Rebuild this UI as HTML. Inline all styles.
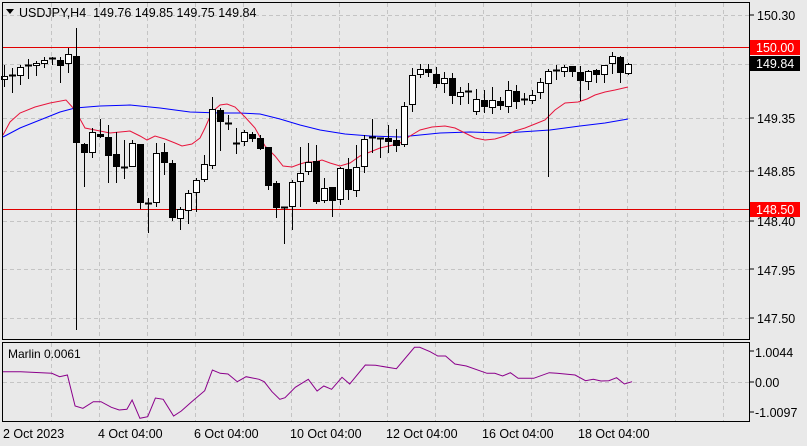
<!DOCTYPE html>
<html><head><meta charset="utf-8"><style>
html,body{margin:0;padding:0;background:#e9e9e9;width:807px;height:446px;overflow:hidden}
svg{display:block;font-family:"Liberation Sans",Tahoma,sans-serif}
</style></head><body>
<svg id="s" width="807" height="446" xmlns="http://www.w3.org/2000/svg">
<rect width="807" height="446" fill="#e9e9e9"/>
<g id="grid" stroke="#c4c4c4" stroke-dasharray="4,3" stroke-width="1"></g>
<line x1="2" y1="47.5" x2="750" y2="47.5" stroke="#e00000"/>
<line x1="2" y1="209.5" x2="750" y2="209.5" stroke="#e00000"/>
<g id="ma"></g>
<g id="c"></g>
<rect x="2.5" y="2.5" width="747" height="337" fill="none" stroke="#000"/>
<rect x="2.5" y="342.5" width="747" height="79" fill="none" stroke="#000"/>
<g font-size="12.5" fill="#000">
<path d="M6 9 L14 9 L10 14 Z" fill="#000"/>
<text x="19" y="17">USDJPY,H4&#160; 149.76 149.85 149.75 149.84</text>
<text x="8" y="358" font-size="12">Marlin 0.0061</text>
<text x="757" y="20">150.30</text>
<text x="757" y="123">149.35</text>
<text x="757" y="176">148.85</text>
<text x="757" y="226">148.40</text>
<text x="757" y="275">147.95</text>
<text x="757" y="323">147.50</text>
<text x="755" y="357">1.0044</text>
<text x="755" y="387">0.00</text>
<text x="755" y="417">-1.0097</text>
<text x="3" y="438">2 Oct 2023</text>
<text x="98" y="438">4 Oct 04:00</text>
<text x="194" y="438">6 Oct 04:00</text>
<text x="290" y="438">10 Oct 04:00</text>
<text x="386" y="438">12 Oct 04:00</text>
<text x="482" y="438">16 Oct 04:00</text>
<text x="578" y="438">18 Oct 04:00</text>
</g>
<rect x="750" y="40" width="50" height="15" fill="#ff0000"/>
<text x="756" y="52" font-size="12.5" fill="#fff">150.00</text>
<rect x="750" y="56" width="50" height="15" fill="#000"/>
<text x="756" y="68" font-size="12.5" fill="#fff">149.84</text>
<rect x="750" y="202" width="50" height="15" fill="#ff0000"/>
<text x="756" y="214" font-size="12.5" fill="#fff">148.50</text>
<g stroke="#000"><line x1="750" y1="15" x2="754" y2="15"/><line x1="750" y1="118" x2="754" y2="118"/><line x1="750" y1="171" x2="754" y2="171"/><line x1="750" y1="221" x2="754" y2="221"/><line x1="750" y1="269" x2="754" y2="269"/><line x1="750" y1="318" x2="754" y2="318"/><line x1="750" y1="351" x2="754" y2="351"/><line x1="750" y1="382" x2="754" y2="382"/><line x1="750" y1="412" x2="754" y2="412"/></g>
</svg>
<script>
var NS="http://www.w3.org/2000/svg";
function el(p,t,a){var e=document.createElementNS(NS,t);for(var k in a)e.setAttribute(k,a[k]);p.appendChild(e);return e;}
var g=document.getElementById('grid');
for(var x=51;x<750;x+=48){el(g,'line',{x1:x+.5,y1:3,x2:x+.5,y2:339});el(g,'line',{x1:x+.5,y1:343,x2:x+.5,y2:421});}
[15,64,118,171,221,269,318].forEach(function(y){el(g,'line',{x1:3,y1:y+.5,x2:749,y2:y+.5});});
el(g,'line',{x1:3,y1:382.5,x2:749,y2:382.5});
// candles: [top,bottom,wickTop,wickBot,bull]
var C=[[76,80,65,87,1],[75,77,68,93,0],[67,76,65,85,1],[65,67,59,79,0],[63,66,61,76,1],[60,64,57,68,1],[58,60,57,65,0],[60,66,57,83,0],[54,64,48,73,1],[56,143,28,330,0],
[144,153,143,187,0],[132,153,128,158,1],[134,137,119,138,0],[137,156,125,183,0],[154,167,132,183,0],[167,168,140,179,0],[143,167,140,167,1],[144,203,144,209,0],[203,205,198,233,0],[153,203,143,207,1],
[152,163,143,175,0],[163,218,160,221,0],[209,219,207,230,1],[193,211,190,224,1],[180,193,178,212,1],[164,180,155,182,1],[109,166,97,169,1],[110,122,108,151,0],[123,124,115,130,0],[143,145,128,154,1],
[132,142,130,146,1],[134,139,132,142,0],[138,149,135,150,0],[147,186,147,190,0],[183,208,181,218,0],[207,208,207,244,0],[182,207,180,230,1],[173,182,147,207,1],[162,172,143,175,1],[161,202,145,204,0],
[188,201,178,203,1],[187,201,187,217,0],[168,200,167,205,1],[169,190,158,200,0],[167,191,145,197,1],[139,167,135,173,1],[137,139,119,153,0],[138,140,138,158,0],[138,142,125,153,0],[140,146,129,152,0],
[106,145,102,147,1],[75,105,68,112,1],[69,75,64,78,1],[69,73,64,77,0],[74,84,67,88,0],[78,84,72,93,1],[78,96,73,104,0],[92,97,87,105,1],[91,92,83,104,0],[99,112,89,115,1],
[100,107,90,113,0],[100,108,87,114,1],[101,106,97,110,0],[90,107,81,113,1],[91,102,85,109,0],[99,101,93,105,0],[95,101,90,104,1],[82,93,78,99,1],[71,84,69,177,1],[70,72,65,80,1],
[67,72,65,77,1],[66,72,66,77,0],[72,81,66,101,0],[71,82,70,90,1],[70,75,69,83,0],[65,75,65,83,1],[56,64,52,74,1],[57,73,56,83,0],[64,74,63,75,1]];
var cg=document.getElementById('c');
C.forEach(function(d,i){var x=Math.round(3.5+8*i)+.5;
el(cg,'line',{x1:x,y1:d[2],x2:x,y2:d[3],stroke:'#000'});
var h=Math.max(1,d[1]-d[0]);
if(h<=2){el(cg,'rect',{x:x-3.5,y:d[0]-0.5,width:7,height:2,fill:'#000'});}
else el(cg,'rect',{x:x-3,y:d[0]+.5,width:6,height:h-1,fill:d[4]?'#fff':'#000',stroke:'#000'});
});
var ma=document.getElementById('ma');
function pl(pts,col){el(ma,'polyline',{points:pts.map(function(p){return p.join(',')}).join(' '),fill:'none',stroke:col,'stroke-width':1});}
pl([[3,137],[20,128],[40,120],[60,112],[75,108],[100,106],[130,105],[160,108],[190,112],[220,113],[240,113],[260,114],[280,119],[300,125],[320,130],[345,134],[370,136],[400,137],[420,135],[440,133],[470,132],[500,133],[520,132],[550,130],[580,126],[605,123],[628,119]],'#0000ff');
pl([[3,135],[10,122],[20,113],[35,107],[50,103],[66,100],[75,110],[85,128],[95,130],[110,133],[120,132],[130,131],[140,136],[147,140],[155,136],[165,139],[175,143],[182,146],[192,144],[200,138],[205,128],[212,112],[220,105],[227,104],[235,107],[245,117],[255,128],[265,146],[275,156],[283,166],[292,167],[300,164],[307,162],[315,162],[322,160],[330,163],[340,166],[350,163],[360,156],[370,152],[380,148],[393,145],[400,143],[410,136],[420,130],[432,127],[445,126],[455,128],[465,133],[475,138],[485,140],[495,139],[505,136],[515,131],[525,128],[535,124],[545,120],[555,110],[565,103],[578,102],[587,99],[595,95],[605,92],[615,90],[628,87]],'#e8143c');
var M=[[5,125],[40,125],[100,130],[115,140],[130,135],[145,228],[160,235],[180,215],[195,215],[215,232],[230,240],[245,238],[255,210],[270,265],[285,260],[300,204],[315,208],[335,258],[350,243],[370,215],[395,182],[410,120],[425,130],[440,132],[458,155],[475,140],[500,148],[510,155],[525,185],[540,208],[550,203],[570,172],[595,148],[612,183],[625,168],[640,178],[660,142],[675,162],[705,105],[725,106],[765,116],[800,52],[810,52],[830,65],[845,78],[860,78],[878,102],[900,108],[940,130],[955,130],[970,138],[985,128],[1000,145],[1030,145],[1060,128],[1075,130],[1110,135],[1130,152],[1145,148],[1160,153],[1175,152],[1190,143],[1205,162],[1220,155]];
el(ma,'polyline',{points:M.map(function(p){return (p[0]/1.93).toFixed(1)+','+(330+p[1]/3).toFixed(1)}).join(' '),fill:'none',stroke:'#8b008b','stroke-width':1});
</script>
</body></html>
